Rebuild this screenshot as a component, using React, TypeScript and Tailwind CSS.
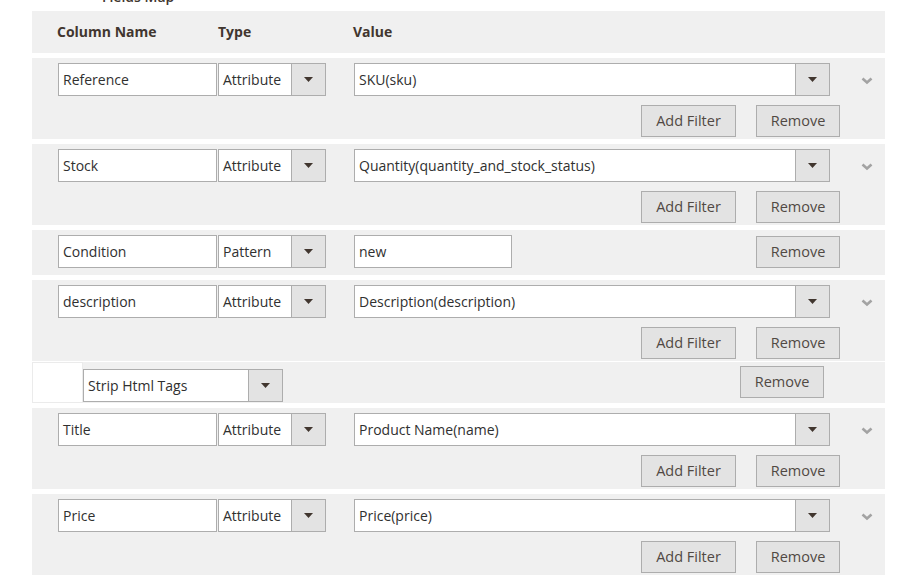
import React from "react";

type Row = {
  name: string;
  type: string;
  value: string;
  kind: "select" | "text";
  filter?: string;
};

const rows: Row[] = [
  { name: "Reference", type: "Attribute", value: "SKU(sku)", kind: "select" },
  {
    name: "Stock",
    type: "Attribute",
    value: "Quantity(quantity_and_stock_status)",
    kind: "select",
  },
  { name: "Condition", type: "Pattern", value: "new", kind: "text" },
  {
    name: "description",
    type: "Attribute",
    value: "Description(description)",
    kind: "select",
    filter: "Strip Html Tags",
  },
  { name: "Title", type: "Attribute", value: "Product Name(name)", kind: "select" },
  { name: "Price", type: "Attribute", value: "Price(price)", kind: "select" },
];

const TextInput = ({ value, width }: { value: string; width: string }) => (
  <div
    className={`${width} h-[33px] bg-white border border-[#adadad] pl-[4px] flex items-center text-[14px] text-[#303030] shrink-0`}
  >
    {value}
  </div>
);

const Select = ({ value, width }: { value: string; width: string }) => (
  <div
    className={`${width} h-[33px] bg-white border border-[#adadad] flex shrink-0`}
  >
    <div className="flex-1 pl-[4px] flex items-center text-[14px] text-[#303030] whitespace-nowrap overflow-hidden">
      {value}
    </div>
    <div className="w-[34px] border-l border-[#adadad] bg-[#e3e3e3] flex items-center justify-center">
      <svg width="9" height="5" viewBox="0 0 9 5">
        <path d="M0 0 H9 L4.5 5 Z" fill="#41362f" />
      </svg>
    </div>
  </div>
);

const Button = ({ label, width }: { label: string; width: string }) => (
  <div
    className={`${width} h-[32px] bg-[#e3e3e3] border border-[#adadad] flex items-center justify-center text-[14.5px] text-[#514943] shrink-0`}
  >
    {label}
  </div>
);

// collapse toggle on the right of each mapped row
const Chevron = () => (
  <svg width="12" height="8" viewBox="0 0 12 8" className="ml-[31px] mt-[2px] shrink-0">
    <path d="M1.5 1.5 L6 5.5 L10.5 1.5" fill="none" stroke="#a3a3a3" strokeWidth="2.6" />
  </svg>
);

export default function App() {
  return (
    <div className="w-[908px] h-[583px] bg-white overflow-hidden font-['Open_Sans',sans-serif]">
      <div className="h-[11px] overflow-hidden pl-[102px]">
        <div className="-mt-[13px] text-[14px] leading-[19px] font-semibold text-[#41362f]">
          Fields Map
        </div>
      </div>

      <div className="ml-[32px] w-[853px] flex flex-col">
        {/* header */}
        <div className="h-[42px] bg-[#f0f0f0] flex items-center pb-[1px] text-[14px] font-bold text-[#41362f]">
          <div className="w-[186px] pl-[25px]">Column Name</div>
          <div className="w-[135px]">Type</div>
          <div>Value</div>
        </div>

        {rows.map((row) => (
          <React.Fragment key={row.name}>
            {row.kind === "select" ? (
              <div className="mt-[5px] bg-[#f0f0f0] pt-[5px] pb-[2px]">
                <div className="flex items-center pl-[26px]">
                  <TextInput value={row.name} width="w-[159px]" />
                  <div className="w-[1px]" />
                  <Select value={row.type} width="w-[108px]" />
                  <div className="w-[28px]" />
                  <Select value={row.value} width="w-[476px]" />
                  <Chevron />
                </div>
                <div className="mt-[9px] flex justify-end gap-[20px] pr-[45px]">
                  <Button label="Add Filter" width="w-[95px]" />
                  <Button label="Remove" width="w-[84px]" />
                </div>
              </div>
            ) : (
              <div className="mt-[5px] bg-[#f0f0f0] pt-[5px] pb-[7px]">
                <div className="flex items-center pl-[26px] pr-[45px]">
                  <TextInput value={row.name} width="w-[159px]" />
                  <div className="w-[1px]" />
                  <Select value={row.type} width="w-[108px]" />
                  <div className="w-[28px]" />
                  <TextInput value={row.value} width="w-[158px]" />
                  <div className="ml-auto">
                    <Button label="Remove" width="w-[84px]" />
                  </div>
                </div>
              </div>
            )}

            {row.filter && (
              <div className="mt-[1px] h-[41px] flex">
                <div className="w-[51px] bg-white border border-[#ebebeb]" />
                <div className="flex-1 bg-[#f0f0f0] flex items-start justify-between pr-[61px]">
                  <div className="mt-[7px]">
                    <Select value={row.filter} width="w-[200px]" />
                  </div>
                  <div className="mt-[4px]">
                    <Button label="Remove" width="w-[84px]" />
                  </div>
                </div>
              </div>
            )}
          </React.Fragment>
        ))}
      </div>
    </div>
  );
}
